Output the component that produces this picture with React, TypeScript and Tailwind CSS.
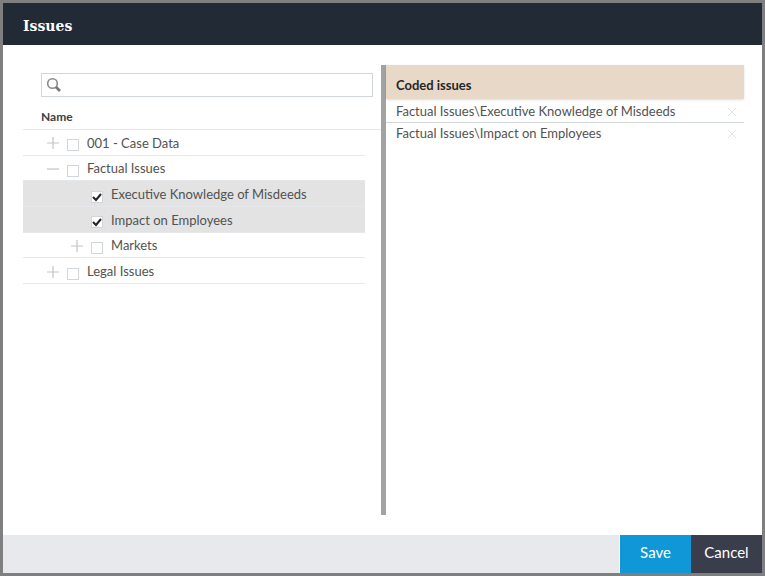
import { X } from "lucide-react";

const font = { fontFamily: "Lato, 'Open Sans', sans-serif" };

const CheckBox = ({ checked }: { checked?: boolean }) => (
  <span className="relative mt-1 h-3 w-3 shrink-0 border border-gray-300 bg-white">
    {checked && (
      <svg viewBox="0 0 12 12" className="absolute -top-px -left-px h-3 w-3">
        <path d="M2 6l3 3 5-6" fill="none" stroke="#222" strokeWidth="2" />
      </svg>
    )}
  </span>
);

const Toggle = ({ type }: { type?: "plus" | "minus" }) => (
  <span className="mr-2 h-3 w-3 shrink-0">
    {type && (
      <svg viewBox="0 0 12 12" className="h-3 w-3">
        <path d={type === "plus" ? "M0 6h12M6 0v12" : "M0 6h12"} stroke="#c4c4c4" strokeWidth="1.2" />
      </svg>
    )}
  </span>
);

const TreeRow = ({
  label,
  type,
  checked,
  child,
}: {
  label: string;
  type?: "plus" | "minus";
  checked?: boolean;
  child?: boolean;
}) => (
  <div
    className={`flex items-center border-b border-gray-200 pt-0.5 pl-6 text-[13px] text-neutral-600 ${
      checked ? "bg-[#e3e3e3]" : ""
    }`}
  >
    {child && <span className="w-6 shrink-0" />}
    <Toggle type={type} />
    <CheckBox checked={checked} />
    <span className="ml-2">{label}</span>
  </div>
);

const CloseIcon = () => <X className="h-4 w-4 text-gray-300" strokeWidth={1} />;

export default function App() {
  return (
    <div className="flex h-screen flex-col border-3 border-[#7f7f7f] bg-white" style={font}>
      <div className="flex h-10.5 items-center bg-[#212a35] px-5 pt-1">
        <h1 className="text-sm font-bold text-white" style={{ fontFamily: "'DejaVu Serif', serif" }}>
          Issues
        </h1>
      </div>

      <div className="flex flex-1 pt-5 pb-5">
        <div className="w-[378px] pt-2 pr-4 pl-5">
          <div className="-mr-2 ml-4.5 flex h-6 items-center border border-gray-300 pl-1">
            <svg viewBox="0 0 16 16" className="h-4 w-4">
              <circle cx="6.5" cy="6.5" r="4.8" fill="none" stroke="#8a8a8a" strokeWidth="1.6" />
              <path d="M10 10l4 4" stroke="#777" strokeWidth="2.6" />
            </svg>
          </div>
          <div className="-mr-4 mt-3 border-b border-gray-200 pb-1 pl-4.5 text-xs font-bold text-neutral-700">
            Name
          </div>
          <div className="grid h-38.5 grid-rows-6">
            <TreeRow label="001 - Case Data" type="plus" />
            <TreeRow label="Factual Issues" type="minus" />
            <TreeRow label="Executive Knowledge of Misdeeds" child checked />
            <TreeRow label="Impact on Employees" child checked />
            <TreeRow label="Markets" child type="plus" />
            <TreeRow label="Legal Issues" type="plus" />
          </div>
        </div>

        <div className="w-[5px] bg-[#a3a3a3]" />
        <div className="mr-4.5 flex-1">
          <div className="flex h-8.5 items-end bg-[#e8d8c8] pb-1 pl-2.5 text-[13px] font-bold text-neutral-800 shadow-sm">
            Coded issues
          </div>
          <div className="flex h-6 items-center justify-between border-b border-gray-300 pt-0.5 pr-1 pl-2.5 text-[13px] text-neutral-600">
            <span>Factual Issues\Executive Knowledge of Misdeeds</span>
            <CloseIcon />
          </div>
          <div className="flex h-5.5 items-center justify-between pr-1 pl-2.5 text-[13px] text-neutral-600">
            <span>Factual Issues\Impact on Employees</span>
            <CloseIcon />
          </div>
        </div>
      </div>

      <div className="flex h-9.5 justify-end bg-[#e8e9ed]">
        <button className="w-18 border-l border-white bg-[#0f97d8] pb-1 text-[15px] text-white">Save</button>
        <button className="w-[71px] bg-[#3a3d4b] pb-1 text-[15px] text-white">Cancel</button>
      </div>
    </div>
  );
}
